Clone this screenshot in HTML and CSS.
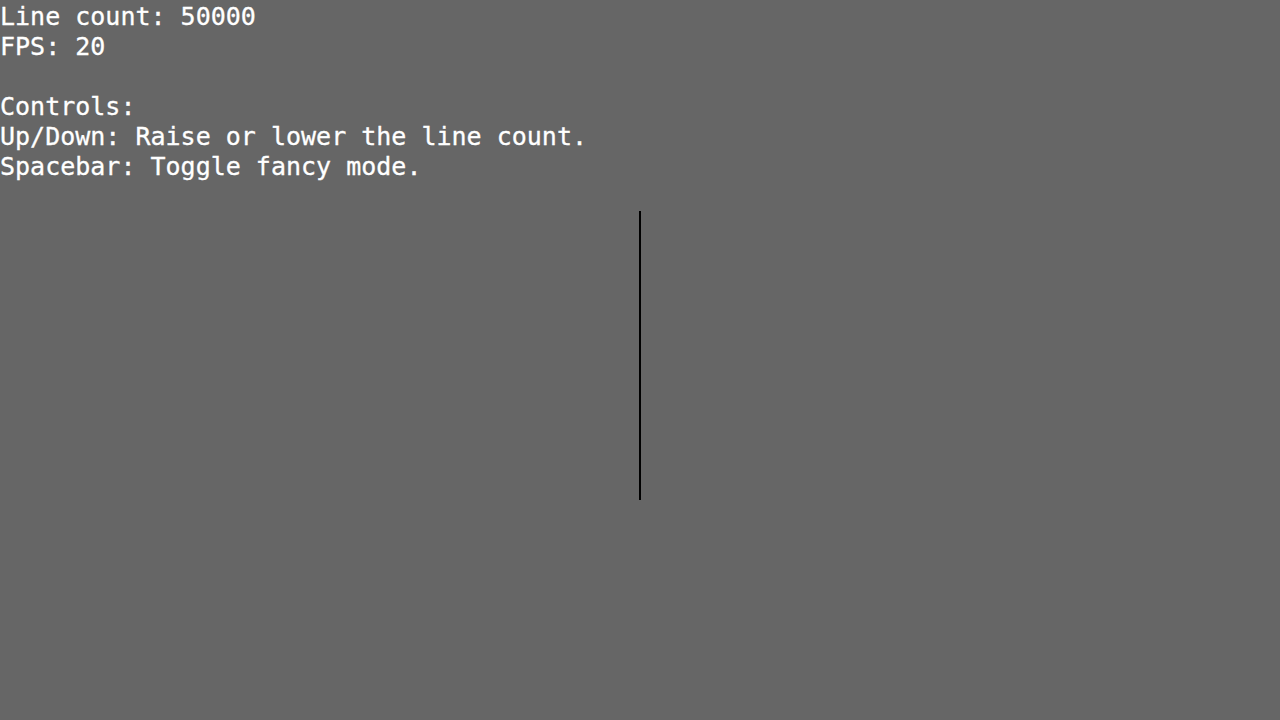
FILE: index.html
```html
<!DOCTYPE html>
<html>
<head>
<meta charset="utf-8">
<link rel="stylesheet" href="styles.css">
</head>
<body>
<div class="hud">
<div class="row">Line count: 50000</div>
<div class="row">FPS: 20</div>
<div class="row"></div>
<div class="row">Controls:</div>
<div class="row">Up/Down: Raise or lower the line count.</div>
<div class="row">Spacebar: Toggle fancy mode.</div>
</div>
<div class="stage"><div class="line"></div></div>
</body>
</html>
```
FILE: styles.css
```css
html, body {
  margin: 0;
  padding: 0;
  width: 1280px;
  height: 720px;
  overflow: hidden;
  background: #666666;
}
.hud {
  font-family: "DejaVu Sans Mono", "Liberation Mono", monospace;
  font-size: 25px;
  line-height: 30px;
  color: #ffffff;
  padding-top: 2px;
  -webkit-text-stroke: 0.3px #ffffff;
}
.row {
  height: 30px;
  white-space: nowrap;
}
.stage {
  display: flex;
  justify-content: center;
  padding-top: 29px;
}
.line {
  width: 2px;
  height: 289px;
  background: #000000;
}
```
